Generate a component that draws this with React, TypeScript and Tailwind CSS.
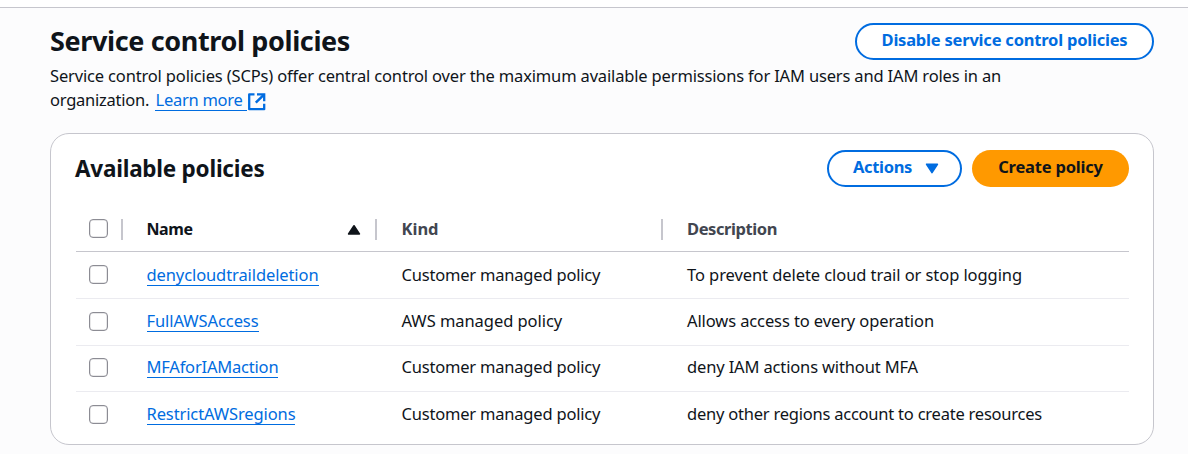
type Policy = {
  name: string;
  kind: string;
  description: string;
  row: string;
  box: string;
  text: string;
  nameTracking: string;
  kindTracking: string;
  descriptionTracking: string;
};

const policies: Policy[] = [
  {
    name: "denycloudtraildeletion",
    kind: "Customer managed policy",
    description: "To prevent delete cloud trail or stop logging",
    row: "h-[47px] border-b",
    box: "mt-[13px]",
    text: "pt-[11px]",
    nameTracking: "tracking-[-0.1px]",
    kindTracking: "tracking-[-0.2px]",
    descriptionTracking: "tracking-[-0.075px]",
  },
  {
    name: "FullAWSAccess",
    kind: "AWS managed policy",
    description: "Allows access to every operation",
    row: "h-[47px] border-b",
    box: "mt-[13px]",
    text: "pt-[10px]",
    nameTracking: "tracking-[-0.08px]",
    kindTracking: "tracking-[-0.05px]",
    descriptionTracking: "tracking-[-0.105px]",
  },
  {
    name: "MFAforIAMaction",
    kind: "Customer managed policy",
    description: "deny IAM actions without MFA",
    row: "h-[46px] border-b",
    box: "mt-[12px]",
    text: "pt-[9px]",
    nameTracking: "tracking-[-0.2px]",
    kindTracking: "tracking-[-0.2px]",
    descriptionTracking: "tracking-[-0.145px]",
  },
  {
    name: "RestrictAWSregions",
    kind: "Customer managed policy",
    description: "deny other regions account to create resources",
    row: "h-[46px]",
    box: "mt-[13px]",
    text: "pt-[10px]",
    nameTracking: "tracking-[-0.11px]",
    kindTracking: "tracking-[-0.2px]",
    descriptionTracking: "tracking-[-0.226px]",
  },
];

const columns = "grid grid-cols-[46px_255px_286px_1fr]";

function Checkbox({ label, className }: { label: string; className: string }) {
  return (
    <input
      type="checkbox"
      aria-label={label}
      className={`ml-[13px] block size-[19px] shrink-0 appearance-none rounded-[4px] border border-[#8c8c94] bg-white ring-[0.5px] ring-inset ring-[#8c8c94]/40 ${className}`}
    />
  );
}

function ExternalIcon() {
  return (
    <svg width="18" height="18" viewBox="0 0 18 18" fill="none" stroke="#006ce0" strokeWidth="2.3" strokeLinejoin="round">
      <path d="M6.5 1.4H1.2v14.8h15V10.8" />
      <path d="M9 1.4h7.2v6.8" strokeLinejoin="miter" />
      <path d="M16 1.6L7.8 9.6" strokeWidth="2.5" />
    </svg>
  );
}

export default function App() {
  return (
    <div className="flex h-[454px] w-[1188px] flex-col overflow-hidden bg-[#fcfcfd] font-['Noto_Sans',sans-serif] text-[16.5px] leading-[24px] text-[#0f141a]">
      <div className="h-[8px] shrink-0 border-b border-[#c6c6cd] bg-white" />
      <main className="flex flex-col pl-[50px] pr-[34px]">
        <header className="h-[125px]">
          <div className="flex h-[56px] items-start justify-between pt-[15px]">
            <h1 className="text-[27px] font-bold leading-[36px] tracking-[-0.37px]">Service control policies</h1>
            <button className="h-[37px] w-[299px] whitespace-nowrap rounded-full border-2 border-[#006ce0] bg-white pb-[4px] font-bold leading-[29px] tracking-[-0.21px] text-[#006ce0]">
              Disable service control policies
            </button>
          </div>
          <p className="whitespace-nowrap tracking-[-0.161px]">
            Service control policies (SCPs) offer central control over the maximum available permissions for IAM users and IAM roles in an
          </p>
          <div className="flex">
            <span className="w-[105px] tracking-[-0.25px]">organization.</span>
            <a className="flex h-[23px] w-[92px] border-b border-[#006ce0] pl-[0.5px] tracking-[-0.27px] text-[#006ce0]">Learn more</a>
            <span className="ml-px mt-[5px] leading-none">
              <ExternalIcon />
            </span>
          </div>
        </header>

        <section className="flex h-[312px] flex-col rounded-[19px] border border-[#c6c6cd] bg-white px-[24px]">
          <div className="flex items-start">
            <h2 className="mt-[18px] grow text-[22.5px] font-bold leading-[34px] tracking-[-0.24px]">Available policies</h2>
            <button className="mt-[16px] flex h-[37px] w-[135px] rounded-full border-2 border-[#006ce0] bg-white pl-[24px] font-bold leading-[29px] tracking-[-0.33px] text-[#006ce0]">
              Actions
              <svg className="ml-[12.5px] mt-[11px]" width="14" height="12" viewBox="0 0 14 12" fill="#006ce0" stroke="#006ce0" strokeWidth="1.6" strokeLinejoin="round">
                <path d="M1.6 1.2h10.8L7 9.6z" />
              </svg>
            </button>
            <button className="ml-[10px] mt-[16px] h-[37px] w-[157px] rounded-full bg-[#ff9900] pb-[4px] font-bold leading-[33px] tracking-[-0.2px]">
              Create policy
            </button>
          </div>

          <div className="ml-px mt-[18px]">
            <div className={`${columns} h-[47px] border-b border-[#c6c6cd] pb-px font-bold`}>
              <div className="flex">
                <Checkbox label="Select all" className="mt-[14px]" />
                <span className="ml-[13px] mt-[14px] h-[21px] w-[2px] shrink-0 bg-[#c6c6cd]" />
              </div>
              <div className="flex pl-[24.5px]">
                <span className="grow pt-[12px] text-[16px] tracking-[-0.43px]">Name</span>
                <svg className="mr-[14.5px] mt-[19px]" width="14" height="12" viewBox="0 0 14 12" fill="#0f141a" stroke="#0f141a" strokeWidth="1.6" strokeLinejoin="round">
                  <path d="M1.6 10h10.8L7 1.8z" />
                </svg>
                <span className="mt-[14px] h-[21px] w-[2px] bg-[#c6c6cd]" />
              </div>
              <div className="flex pl-[24.5px] text-[#424650]">
                <span className="grow pt-[12px]">Kind</span>
                <span className="mt-[14px] h-[21px] w-[2px] bg-[#c6c6cd]" />
              </div>
              <div className="pl-[24px] pt-[12px] tracking-[-0.42px] text-[#424650]">Description</div>
            </div>

            {policies.map((p) => (
              <div key={p.name} className={`${columns} border-[#ebebf0] ${p.row}`}>
                <Checkbox label={p.name} className={p.box} />
                <div className={`flex items-start pl-[24.5px] ${p.text}`}>
                  <a className={`block h-[23px] border-b border-[#006ce0] text-[#006ce0] ${p.nameTracking}`}>{p.name}</a>
                </div>
                <div className={`pl-[24.5px] ${p.text} ${p.kindTracking}`}>{p.kind}</div>
                <div className={`whitespace-nowrap pl-[24px] ${p.text} ${p.descriptionTracking}`}>{p.description}</div>
              </div>
            ))}
          </div>
        </section>
      </main>
    </div>
  );
}
